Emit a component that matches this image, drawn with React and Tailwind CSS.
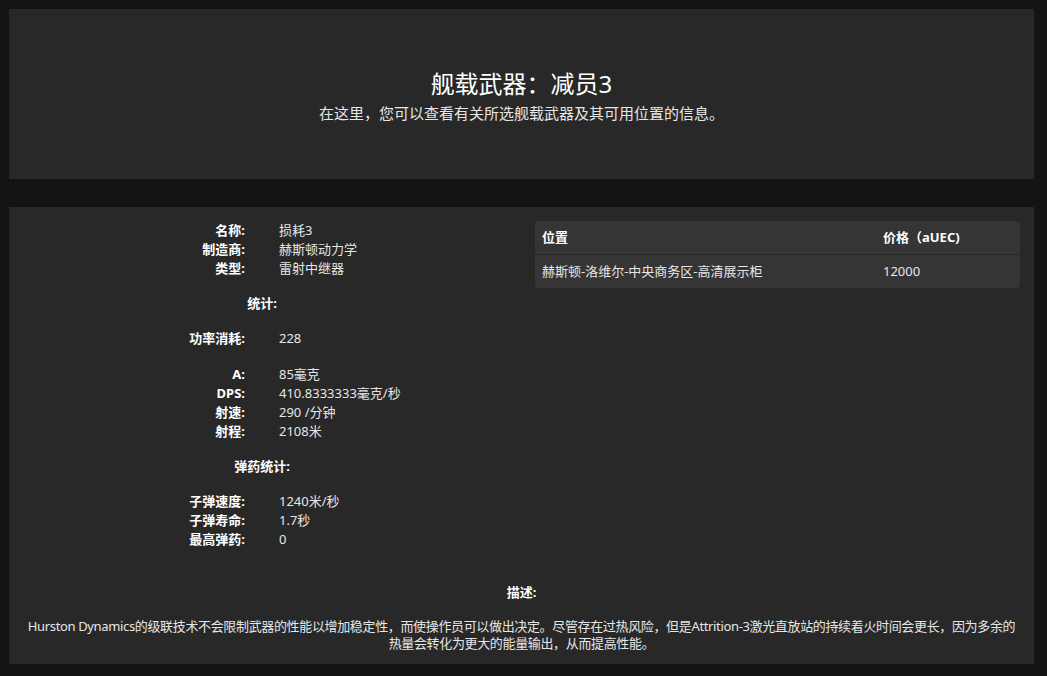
import React from 'react';

const FONT = { fontFamily: '"Noto Sans", "Noto Sans CJK SC", sans-serif' };

const basic = [
  ['名称:', '损耗3'],
  ['制造商:', '赫斯顿动力学'],
  ['类型:', '雷射中继器'],
];

const power = [['功率消耗:', '228']];

const damage = [
  ['A:', '85毫克'],
  ['DPS:', '410.8333333毫克/秒'],
  ['射速:', '290 /分钟'],
  ['射程:', '2108米'],
];

const ammo = [
  ['子弹速度:', '1240米/秒'],
  ['子弹寿命:', '1.7秒'],
  ['最高弹药:', '0'],
];

function Rows({ rows, className = '' }) {
  return (
    <div className={`grid grid-cols-[226px_1fr] gap-x-[34px] ${className}`}>
      {rows.map(([k, v]) => (
        <React.Fragment key={k}>
          <div className="h-[19px] leading-[19px] text-right font-bold text-white">{k}</div>
          <div className="h-[19px] leading-[19px] text-[#e6e6e6]">{v}</div>
        </React.Fragment>
      ))}
    </div>
  );
}

function SectionTitle({ children }) {
  return (
    <div className="mt-4 w-[486px] h-[19px] leading-[19px] text-center font-bold text-white">{children}</div>
  );
}

export default function App() {
  return (
    <div style={FONT} className="min-h-[676px] bg-[#141414] pl-[9px] pr-[13px] pt-[9px] pb-[13px] text-[13px]">
      <div className="h-[170px] bg-[#282828] flex flex-col items-center justify-center">
        <h1 className="mt-[3px] text-[24px] leading-[30px] text-white">舰载武器：减员3</h1>
        <p className="mt-[4px] text-[15px] leading-[20px] text-[#e6e6e6]">在这里，您可以查看有关所选舰载武器及其可用位置的信息。</p>
      </div>

      <div className="mt-[28px] bg-[#282828] pt-[14px] pb-[12px] px-[10px]">
        <div className="flex">
          <div className="w-[505px]">
            <Rows rows={basic} />
            <SectionTitle>统计:</SectionTitle>
            <Rows rows={power} className="mt-4" />
            <Rows rows={damage} className="mt-[17px]" />
            <SectionTitle>弹药统计:</SectionTitle>
            <Rows rows={ammo} className="mt-4" />
          </div>
          <div className="flex-1 ml-[11px] mr-[4px]">
            <div className="bg-[#353535] rounded-[4px] overflow-hidden">
              <div className="flex h-[34px] items-center border-b border-[#262626] font-bold text-white">
                <div className="w-[340px] px-[7px]">位置</div>
                <div className="flex-1 px-[8px]">价格（aUEC)</div>
              </div>
              <div className="flex h-[33px] items-center text-[#e6e6e6]">
                <div className="w-[340px] px-[7px]">赫斯顿-洛维尔-中央商务区-高清展示柜</div>
                <div className="flex-1 px-[8px]">12000</div>
              </div>
            </div>
          </div>
        </div>

        <div className="mt-[34px] text-center font-bold text-white h-[19px] leading-[19px]">描述:</div>
        <p className="mt-[16px] text-center leading-[17px] tracking-[-0.35px] text-[#e6e6e6]">
          Hurston Dynamics的级联技术不会限制武器的性能以增加稳定性，而使操作员可以做出决定。尽管存在过热风险，但是Attrition-3激光直放站的持续着火时间会更长，因为多余的<br />热量会转化为更大的能量输出，从而提高性能。
        </p>
      </div>
    </div>
  );
}
